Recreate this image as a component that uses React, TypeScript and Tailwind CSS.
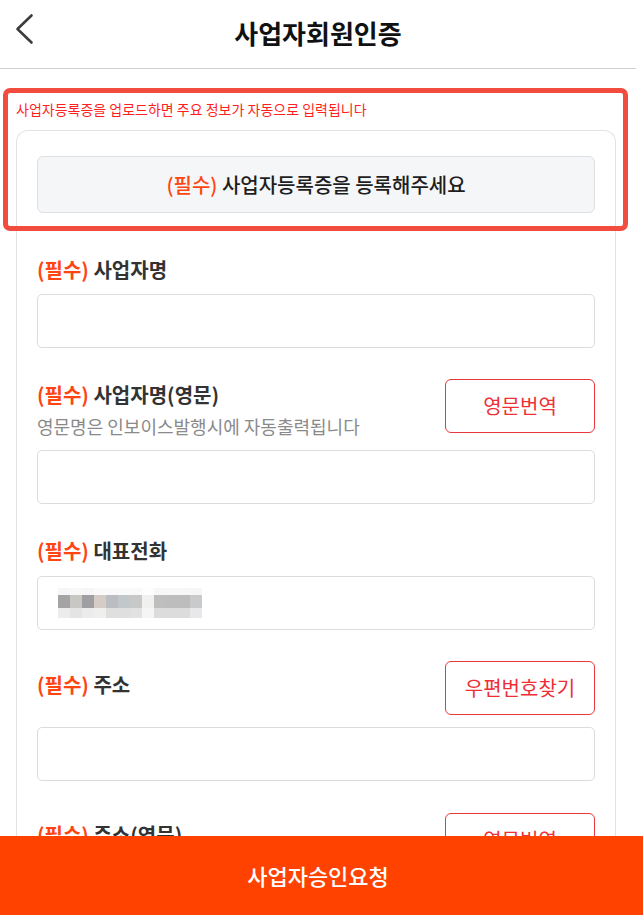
import React from "react";

const font = { fontFamily: '"Noto Sans CJK KR", "Noto Sans", sans-serif' };

const Required = () => <span className="text-[#ff4612]">(필수)</span>;

const Label = ({ children }: { children: React.ReactNode }) => (
  <div className="text-[20px] leading-[26px] font-bold text-[#333]">
    <Required /> {children}
  </div>
);

const Input = ({ children }: { children?: React.ReactNode }) => (
  <div className="h-[54px] w-full rounded-[5px] border border-[#dcdcdc] bg-white flex items-center px-5">
    {children}
  </div>
);

const OutlineButton = ({ children }: { children: React.ReactNode }) => (
  <button className="h-[54px] w-[150px] shrink-0 rounded-[6px] border border-[#e8383d] bg-white text-[20px] text-[#ee2f35]">
    {children}
  </button>
);

// blurred phone number, drawn as pixel blocks
const blurRows = [
  ["#f6f6f6", "#f8f8f8", "#f6f6f6", "#fafafa", "#f9f9f9", "#fafafa", "#f9f9f9", "#fdfdfd", "#f7f7f7", "#f7f7f7", "#f7f7f7", "#f6f6f6"],
  ["#a4a4a4", "#c9c7c4", "#9f9fa1", "#d4ccc5", "#bcbdc3", "#c0c8ca", "#c8c8c8", "#f0f0ef", "#bebebe", "#bdbdbd", "#bdbdbd", "#c9cacc"],
  ["#ececec", "#e4e4e4", "#ececec", "#efefed", "#dfdfdf", "#dfdfdf", "#e2e2e2", "#f5f5f5", "#dcdcdc", "#dcdcdc", "#dcdcdc", "#e8e8ea"],
];

const BlurredPhone = () => (
  <div className="flex flex-col">
    {blurRows.map((row, i) => (
      <div key={i} className={`flex ${i === 1 ? "h-[13px]" : i === 0 ? "h-[7px]" : "h-[10px]"}`}>
        {row.map((c, j) => (
          <div key={j} className="w-[12px] h-full" style={{ backgroundColor: c }} />
        ))}
      </div>
    ))}
  </div>
);

export default function App() {
  return (
    <div className="min-h-screen bg-white" style={font}>
      <div className="w-[636px] pb-[120px]">
        {/* header */}
        <header className="relative h-[69px] border-b border-[#cfcfcf] flex items-center justify-center">
          <button className="absolute left-[14px] top-[13px] p-0">
            <svg width="20" height="32" viewBox="0 0 20 32" fill="none">
              <polyline
                points="17.5,2.5 3.5,16 17.5,29.5"
                stroke="#3d3d3d"
                strokeWidth="2.6"
                strokeLinecap="round"
                strokeLinejoin="round"
              />
            </svg>
          </button>
          <h1 className="text-[26px] font-bold text-[#111] -mt-[3px]">사업자회원인증</h1>
        </header>

        {/* upload section, highlighted */}
        <div className="relative">
          <div className="pointer-events-none absolute left-[3px] top-[19px] w-[625px] h-[143px] rounded-[7px] border-[5px] border-[#f24c3f] z-10" />

          <p className="pl-4 pt-[30px] text-[14px] leading-[20px] text-[#ff1f1f]">
            사업자등록증을 업로드하면 주요 정보가 자동으로 입력됩니다
          </p>

          <div className="ml-4 mt-[11px] w-[600px] rounded-t-[12px] border border-b-0 border-[#e3e3e3] px-5 pt-[25px]">
            <button className="h-[57px] w-full rounded-[6px] border border-[#dfe0e4] bg-[#f5f6f8] text-[20px] font-medium text-[#1e1e1e]">
              <Required /> 사업자등록증을 등록해주세요
            </button>

            {/* 사업자명 */}
            <div className="mt-[44px]">
              <Label>사업자명</Label>
              <div className="mt-[11px]">
                <Input />
              </div>
            </div>

            {/* 사업자명(영문) */}
            <div className="mt-[31px]">
              <div className="flex items-start justify-between">
                <div className="pt-[3px]">
                  <Label>사업자명(영문)</Label>
                  <p className="mt-[6px] text-[18px] leading-[24px] text-[#8a8a8a]">
                    영문명은 인보이스발행시에 자동출력됩니다
                  </p>
                </div>
                <OutlineButton>영문번역</OutlineButton>
              </div>
              <div className="mt-[12px]">
                <Input />
              </div>
            </div>

            {/* 대표전화 */}
            <div className="mt-[34px]">
              <Label>대표전화</Label>
              <div className="mt-[12px]">
                <Input>
                  <BlurredPhone />
                </Input>
              </div>
            </div>

            {/* 주소 */}
            <div className="mt-[31px]">
              <div className="flex items-start justify-between">
                <div className="pt-[11px]">
                  <Label>주소</Label>
                </div>
                <OutlineButton>우편번호찾기</OutlineButton>
              </div>
              <div className="mt-[12px]">
                <Input />
              </div>
            </div>

            {/* 주소(영문) */}
            <div className="mt-[32px]">
              <div className="flex items-start justify-between">
                <div className="pt-[9px]">
                  <Label>주소(영문)</Label>
                </div>
                <OutlineButton>영문번역</OutlineButton>
              </div>
              <div className="mt-[12px]">
                <Input />
              </div>
            </div>
          </div>
        </div>
      </div>

      {/* bottom action */}
      <div className="fixed bottom-0 left-0 right-0 h-[79px] bg-[#ff4200] flex items-center justify-center pr-[7px]">
        <span className="text-[22px] font-medium text-white">사업자승인요청</span>
      </div>
    </div>
  );
}
